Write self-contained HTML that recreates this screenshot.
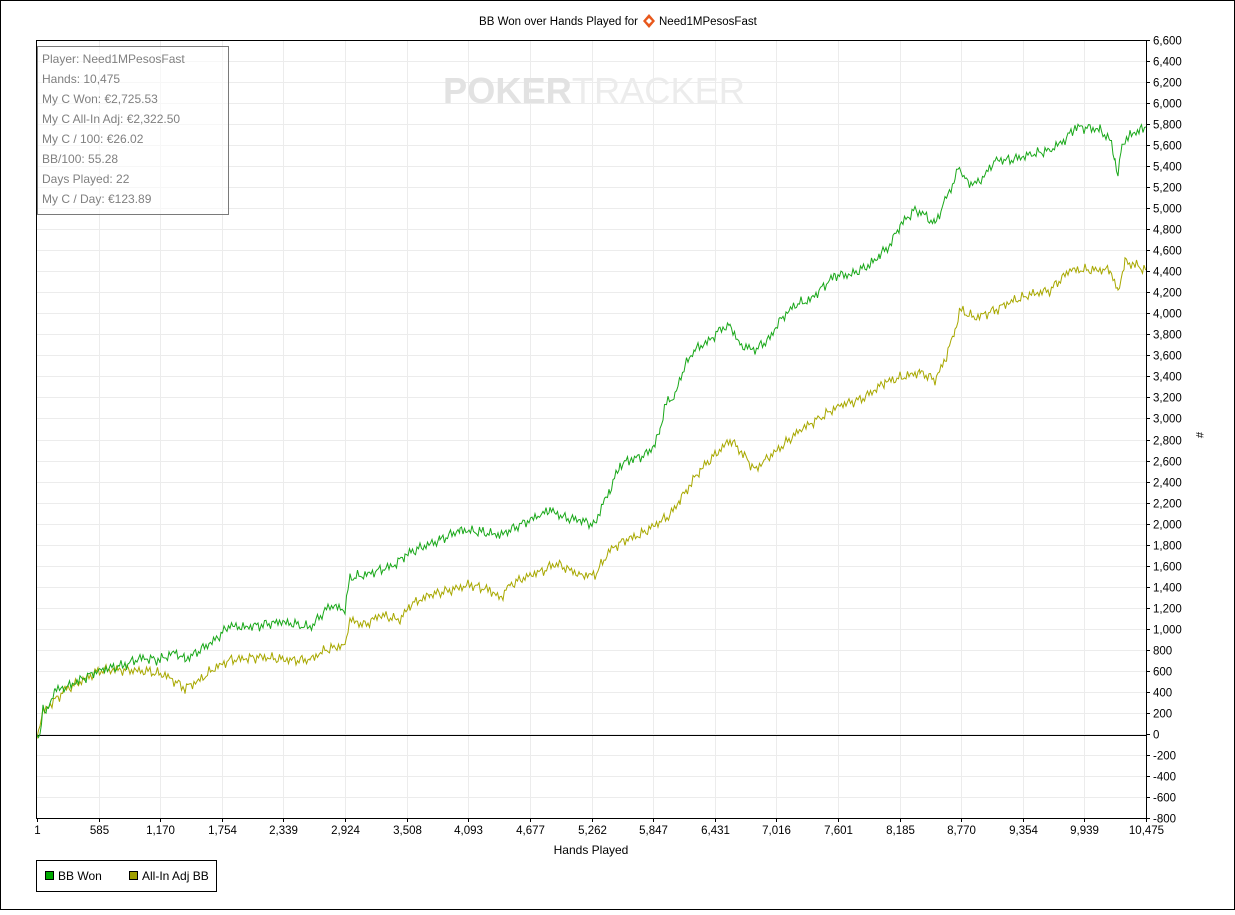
<!DOCTYPE html><html><head><meta charset="utf-8"><style>
body{margin:0;background:#fff;width:1235px;height:910px;overflow:hidden;font-family:"Liberation Sans",sans-serif}
</style></head><body>
<svg id="s" width="1235" height="910" xmlns="http://www.w3.org/2000/svg" font-family="Liberation Sans, sans-serif">
<rect x="0.5" y="0.5" width="1234" height="909" fill="#fff" stroke="#000"/>
<g id="grid" stroke="#ececec" stroke-width="1"></g>
<text x="443" y="103" font-size="36" font-weight="bold" fill="#e2e2e2" textLength="302" lengthAdjust="spacingAndGlyphs">POKER<tspan fill="#ececec" font-weight="normal">TRACKER</tspan></text>
<line x1="37" y1="735.5" x2="1146" y2="735.5" stroke="#000"/>
<polyline id="y" fill="none" stroke="#a8a800" stroke-width="1"/>
<polyline id="g" fill="none" stroke="#1aa81a" stroke-width="1"/>
<rect x="37.5" y="46.5" width="191" height="168" fill="rgba(255,255,255,0.6)" stroke="#7a7a7a"/>
<g font-size="12" fill="#808080">
<text x="42" y="63">Player: Need1MPesosFast</text><text x="42" y="83">Hands: 10,475</text><text x="42" y="103">My C Won: €2,725.53</text><text x="42" y="123">My C All-In Adj: €2,322.50</text><text x="42" y="143">My C / 100: €26.02</text><text x="42" y="163">BB/100: 55.28</text><text x="42" y="183">Days Played: 22</text><text x="42" y="203">My C / Day: €123.89</text></g>
<rect x="36.5" y="40.5" width="1110" height="778" fill="none" stroke="#000"/>
<g id="ax" font-size="11.5" fill="#000"></g>
<text x="638" y="25" font-size="11.5" text-anchor="end">BB Won over Hands Played for</text>
<path d="M649 14 L655 21 L649 28 L643 21Z" fill="#e8581c"/><path d="M649 18 L652 21 L649 24 L646 21Z" fill="#fff"/>
<text x="659" y="25" font-size="11.5">Need1MPesosFast</text>
<text x="591" y="854" font-size="12" text-anchor="middle">Hands Played</text>
<text x="1196" y="432" font-size="11" transform="rotate(90 1196 432)">#</text>
<rect x="36.5" y="860.5" width="180" height="31" fill="#fff" stroke="#000"/>
<rect x="45.5" y="871.5" width="8" height="8" fill="#0a0" stroke="#000"/>
<text x="58" y="880" font-size="12">BB Won</text>
<rect x="129.5" y="871.5" width="8" height="8" fill="#a0a000" stroke="#000"/>
<text x="142" y="880" font-size="12">All-In Adj BB</text>
</svg>
<script>
var NS="http://www.w3.org/2000/svg",grid=document.getElementById('grid'),ax=document.getElementById('ax');
function el(p,t,a,txt){var e=document.createElementNS(NS,t);for(var k in a)e.setAttribute(k,a[k]);if(txt!=null)e.textContent=txt;p.appendChild(e);return e;}
for(var i=0;i<=37;i++){var v=6600-i*200,y=Math.round(40+i*778/37)+.5;if(i>0&&i<37)el(grid,'line',{x1:37,x2:1146,y1:y,y2:y});el(ax,'line',{x1:1146,x2:1150,y1:y,y2:y,stroke:'#000'});el(ax,'text',{x:1153,y:y+4},v.toLocaleString('en-US'));}
var xl=["1","585","1,170","1,754","2,339","2,924","3,508","4,093","4,677","5,262","5,847","6,431","7,016","7,601","8,185","8,770","9,354","9,939","10,475"];
for(var i=0;i<19;i++){var x=Math.round(37+i*1109/18)+.5;if(i>0&&i<18)el(grid,'line',{x1:x,x2:x,y1:40,y2:818});el(ax,'line',{x1:x,x2:x,y1:818,y2:822,stroke:'#000'});el(ax,'text',{x:x,y:834,'text-anchor':'middle'},xl[i]);}
var G=[[37,735],[40,738],[43,706],[47,712],[55,690],[65,688],[80,680],[100,670],[125,665],[140,658],[160,660],[175,652],[185,660],[200,650],[215,640],[230,625],[240,628],[260,625],[280,622],[300,625],[310,628],[330,605],[345,610],[350,578],[365,575],[380,570],[395,565],[405,555],[420,548],[440,540],[460,530],[480,532],[500,535],[520,525],[540,515],[550,510],[565,518],[580,520],[595,525],[600,510],[610,490],[620,465],[630,460],[645,455],[655,445],[660,430],[665,405],[675,395],[685,365],[695,350],[710,340],[720,330],[730,325],[740,345],[755,350],[770,338],[780,320],[795,305],[810,300],[825,285],[835,275],[850,275],[870,265],[880,255],[890,245],[900,225],[915,210],[925,215],[935,225],[945,200],[955,180],[958,165],[965,180],[975,185],[985,175],[995,160],[1010,160],[1030,155],[1050,150],[1065,140],[1075,127],[1090,128],[1100,130],[1110,140],[1115,160],[1118,175],[1122,145],[1130,135],[1140,130],[1146,127]];
var Y=[[37,735],[43,712],[55,700],[65,690],[80,682],[100,670],[130,670],[150,672],[165,675],[185,688],[200,680],[215,668],[230,660],[260,657],[290,660],[310,660],[325,650],[345,645],[350,620],[365,625],[380,615],[400,620],[410,605],[430,595],[450,590],[470,585],[490,590],[500,598],[510,585],[530,575],[545,570],[555,563],[570,570],[580,575],[595,575],[610,550],[625,540],[640,535],[655,525],[670,515],[680,500],[690,485],[700,470],[715,455],[730,440],[740,450],[755,470],[765,460],[780,448],[800,430],[820,418],[840,405],[860,400],[875,390],[885,382],[900,378],[920,372],[935,380],[945,360],[955,330],[960,310],[975,318],[995,310],[1010,302],[1030,295],[1050,290],[1070,270],[1085,270],[1100,270],[1110,270],[1118,292],[1125,262],[1135,265],[1146,270]];
function pts(P,s){var o=[];for(var i=0;i<P.length-1;i++){var a=P[i],b=P[i+1];for(var x=a[0];x<b[0];x+=1.5){var t=(x-a[0])/(b[0]-a[0]);var y=a[1]+(b[1]-a[1])*t+3*Math.sin(x*1.7+s)+2*Math.sin(x*0.61+s*2)+1.5*Math.sin(x*3.3);o.push(x.toFixed(1)+','+y.toFixed(1));}}o.push(P[P.length-1].join(','));return o.join(' ');}
document.getElementById('g').setAttribute('points',pts(G,0));
document.getElementById('y').setAttribute('points',pts(Y,1.3));
</script>
</body></html>
